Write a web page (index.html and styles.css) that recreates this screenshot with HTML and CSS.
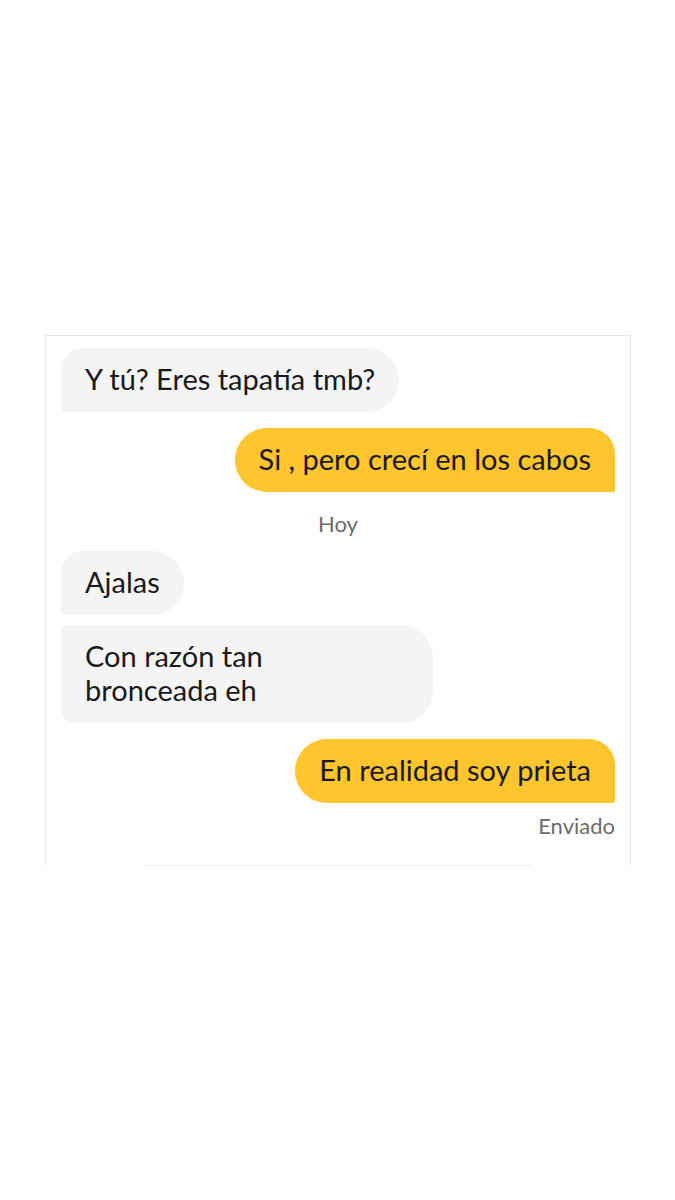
FILE: index.html
```html
<!DOCTYPE html>
<html lang="es">
<head>
    <meta charset="UTF-8">
    <meta name="viewport" content="width=device-width, initial-scale=1.0">
    <title>Chat</title>
    <link rel="stylesheet" href="styles.css">
</head>
<body>
    <div class="page">
        <div class="chat">
            <div class="row in">
                <div class="bubble them first last">Y tú? Eres tapatía tmb?</div>
            </div>
            <div class="row out">
                <div class="bubble me">Si , pero crecí en los cabos</div>
            </div>
            <div class="day">Hoy</div>
            <div class="row in">
                <div class="bubble them first">Ajalas</div>
            </div>
            <div class="row in tight">
                <div class="bubble them last wide">Con razón tan<br>bronceada eh</div>
            </div>
            <div class="row out">
                <div class="bubble me">En realidad soy prieta</div>
            </div>
            <div class="status">Enviado</div>
            <div class="composer-line"></div>
        </div>
    </div>
</body>
</html>
```

FILE: styles.css
```css
* {
    box-sizing: border-box;
}
body {
    margin: 0;
    padding: 0;
    background-color: #fff;
    font-family: Lato, 'Noto Sans', sans-serif;
    color: #1a1a1a;
}
.page {
    padding-top: 335px;
    padding-left: 45px;
}
.chat {
    width: 586px;
    border: 1px solid #e8e8e8;
    border-bottom: none;
    padding: 12px 15px 0 15px;
    display: flex;
    flex-direction: column;
}
.row {
    display: flex;
    margin-bottom: 16px;
}
.row.in {
    justify-content: flex-start;
}
.row.out {
    justify-content: flex-end;
}
.row.tight {
    margin-top: -6px;
}
.bubble {
    font-size: 29px;
    line-height: 34px;
    padding: 14px 24px 16px 24px;
}
.them {
    background-color: #f4f4f4;
    border-radius: 6px 32px 32px 4px;
}
.them.first {
    border-top-left-radius: 22px;
}
.them.last {
    border-bottom-left-radius: 14px;
}
.them.first.last {
    border-radius: 22px 32px 32px 4px;
}
.them.wide {
    width: 372px;
}
.me {
    background-color: #fec52c;
    border-radius: 32px 26px 2px 32px;
}
.day {
    text-align: center;
    font-size: 22px;
    color: #6b6b6b;
    margin: 4px 0 15px 0;
    line-height: 24px;
}
.status {
    text-align: right;
    font-size: 22px;
    color: #6b6b6b;
    line-height: 24px;
    margin-top: -5px;
}
.composer-line {
    height: 1px;
    background-color: #ececec;
    margin: 27px 84px 0 84px;
}
```
